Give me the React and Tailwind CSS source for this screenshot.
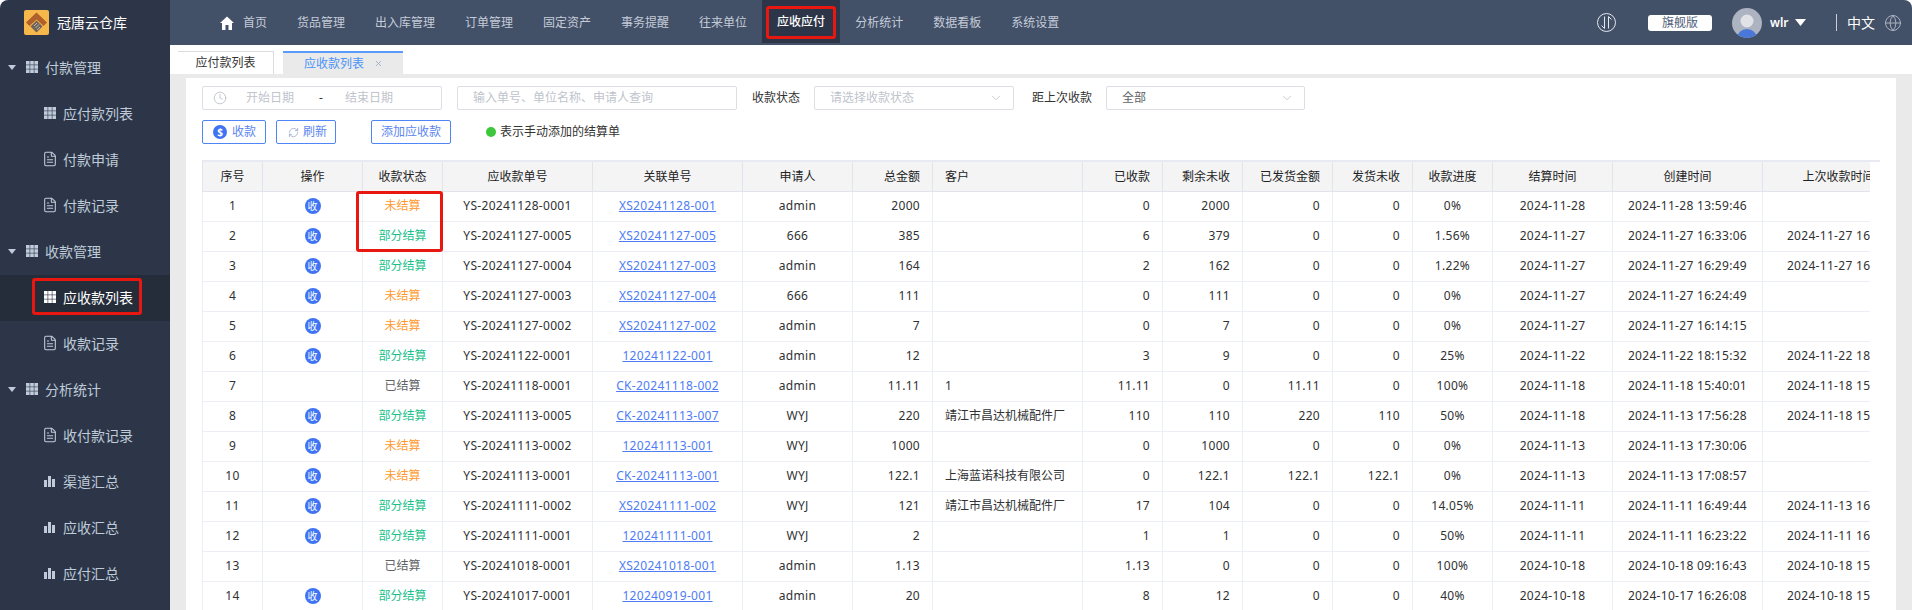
import { ChevronDown, Clock, FileText, Globe, RefreshCw, X } from "lucide-react";

const navItems = ["货品管理", "出入库管理", "订单管理", "固定资产", "事务提醒", "往来单位", "应收应付", "分析统计", "数据看板", "系统设置"];

const sideMenu = [
  {
    title: "付款管理",
    items: [
      { label: "应付款列表", icon: "grid" },
      { label: "付款申请", icon: "file" },
      { label: "付款记录", icon: "file" },
    ],
  },
  {
    title: "收款管理",
    items: [
      { label: "应收款列表", icon: "grid", active: true },
      { label: "收款记录", icon: "file" },
    ],
  },
  {
    title: "分析统计",
    items: [
      { label: "收付款记录", icon: "file" },
      { label: "渠道汇总", icon: "bar" },
      { label: "应收汇总", icon: "bar" },
      { label: "应付汇总", icon: "bar" },
    ],
  },
];

const columns = [
  { title: "序号", width: "w-[60px]", align: "text-center" },
  { title: "操作", width: "w-[100px]", align: "text-center" },
  { title: "收款状态", width: "w-[80px]", align: "text-center" },
  { title: "应收款单号", width: "w-[150px]", align: "text-center" },
  { title: "关联单号", width: "w-[150px]", align: "text-center" },
  { title: "申请人", width: "w-[110px]", align: "text-center" },
  { title: "总金额", width: "w-[80px]", align: "text-right" },
  { title: "客户", width: "w-[150px]", align: "text-left" },
  { title: "已收款", width: "w-[80px]", align: "text-right" },
  { title: "剩余未收", width: "w-[80px]", align: "text-right" },
  { title: "已发货金额", width: "w-[90px]", align: "text-right" },
  { title: "发货未收", width: "w-[80px]", align: "text-right" },
  { title: "收款进度", width: "w-[80px]", align: "text-center" },
  { title: "结算时间", width: "w-[120px]", align: "text-center" },
  { title: "创建时间", width: "w-[150px]", align: "text-center" },
  { title: "上次收款时间", width: "w-[168px]", align: "text-center" },
];

// 序号 is taken from the array index
const rows = [
  ["未结算", "YS-20241128-0001", "XS20241128-001", "admin", "2000", "", "0", "2000", "0", "0", "0%", "2024-11-28", "2024-11-28 13:59:46", ""],
  ["部分结算", "YS-20241127-0005", "XS20241127-005", "666", "385", "", "6", "379", "0", "0", "1.56%", "2024-11-27", "2024-11-27 16:33:06", "2024-11-27 16:40:12"],
  ["部分结算", "YS-20241127-0004", "XS20241127-003", "admin", "164", "", "2", "162", "0", "0", "1.22%", "2024-11-27", "2024-11-27 16:29:49", "2024-11-27 16:35:20"],
  ["未结算", "YS-20241127-0003", "XS20241127-004", "666", "111", "", "0", "111", "0", "0", "0%", "2024-11-27", "2024-11-27 16:24:49", ""],
  ["未结算", "YS-20241127-0002", "XS20241127-002", "admin", "7", "", "0", "7", "0", "0", "0%", "2024-11-27", "2024-11-27 16:14:15", ""],
  ["部分结算", "YS-20241122-0001", "120241122-001", "admin", "12", "", "3", "9", "0", "0", "25%", "2024-11-22", "2024-11-22 18:15:32", "2024-11-22 18:20:41"],
  ["已结算", "YS-20241118-0001", "CK-20241118-002", "admin", "11.11", "1", "11.11", "0", "11.11", "0", "100%", "2024-11-18", "2024-11-18 15:40:01", "2024-11-18 15:42:10"],
  ["部分结算", "YS-20241113-0005", "CK-20241113-007", "WYJ", "220", "靖江市昌达机械配件厂", "110", "110", "220", "110", "50%", "2024-11-18", "2024-11-13 17:56:28", "2024-11-18 15:30:18"],
  ["未结算", "YS-20241113-0002", "120241113-001", "WYJ", "1000", "", "0", "1000", "0", "0", "0%", "2024-11-13", "2024-11-13 17:30:06", ""],
  ["未结算", "YS-20241113-0001", "CK-20241113-001", "WYJ", "122.1", "上海蓝诺科技有限公司", "0", "122.1", "122.1", "122.1", "0%", "2024-11-13", "2024-11-13 17:08:57", ""],
  ["部分结算", "YS-20241111-0002", "XS20241111-002", "WYJ", "121", "靖江市昌达机械配件厂", "17", "104", "0", "0", "14.05%", "2024-11-11", "2024-11-11 16:49:44", "2024-11-13 16:10:33"],
  ["部分结算", "YS-20241111-0001", "120241111-001", "WYJ", "2", "", "1", "1", "0", "0", "50%", "2024-11-11", "2024-11-11 16:23:22", "2024-11-11 16:30:05"],
  ["已结算", "YS-20241018-0001", "XS20241018-001", "admin", "1.13", "", "1.13", "0", "0", "0", "100%", "2024-10-18", "2024-10-18 09:16:43", "2024-10-18 15:20:16"],
  ["部分结算", "YS-20241017-0001", "120240919-001", "admin", "20", "", "8", "12", "0", "0", "40%", "2024-10-18", "2024-10-17 16:26:08", "2024-10-18 15:12:47"],
];

const statusColor = {
  未结算: "text-[#ff9a2e]",
  部分结算: "text-[#1cbf8b]",
  已结算: "text-[#606266]",
};

function GridIcon({ className }) {
  return (
    <svg viewBox="0 0 12 12" className={className} fill="currentColor">
      <rect x="0" y="0" width="3.6" height="3.6" />
      <rect x="4.2" y="0" width="3.6" height="3.6" />
      <rect x="8.4" y="0" width="3.6" height="3.6" />
      <rect x="0" y="4.2" width="3.6" height="3.6" />
      <rect x="4.2" y="4.2" width="3.6" height="3.6" />
      <rect x="8.4" y="4.2" width="3.6" height="3.6" />
      <rect x="0" y="8.4" width="3.6" height="3.6" />
      <rect x="4.2" y="8.4" width="3.6" height="3.6" />
      <rect x="8.4" y="8.4" width="3.6" height="3.6" />
    </svg>
  );
}

function BarIcon({ className }) {
  return (
    <svg viewBox="0 0 11 11" className={className} fill="currentColor">
      <rect x="0" y="4" width="3" height="7" />
      <rect x="4" y="0" width="3" height="11" />
      <rect x="8" y="3" width="3" height="8" />
    </svg>
  );
}

function Caret({ className }) {
  return (
    <svg viewBox="0 0 8 5" className={className} fill="currentColor">
      <path d="M0 0h8L4 5z" />
    </svg>
  );
}

function Logo() {
  return (
    <svg viewBox="0 0 25 25" className="w-[25px] h-[25px] shrink-0">
      <rect width="25" height="25" rx="2" fill="#f7b84b" />
      <path d="M12.5 2.5 23 12.5 19.5 16 12.5 9.5 5.5 16 2 12.5z" fill="#b0602a" />
      <path d="M12.5 10.5 18.5 16.5 12.5 22.5 6.5 16.5z" fill="#6f6259" />
      <path d="M10 16l3-3M11.5 18l3.5-3.5M13 20l3-3" stroke="#d8d0c8" strokeWidth="0.8" />
    </svg>
  );
}

function Avatar() {
  return (
    <svg viewBox="0 0 30 30" className="w-[30px] h-[30px] shrink-0">
      <clipPath id="avatar-clip">
        <circle cx="15" cy="15" r="15" />
      </clipPath>
      <g clipPath="url(#avatar-clip)">
        <rect width="30" height="30" fill="#adb3c0" />
        <circle cx="15" cy="13" r="6.5" fill="#e0e2e7" />
        <ellipse cx="15" cy="30" rx="10" ry="9" fill="#4a78d8" />
      </g>
    </svg>
  );
}

function SideMenu() {
  return (
    <div>
      {sideMenu.map((group) => (
        <div key={group.title}>
          <div className="h-[46px] pb-[2px] flex items-center pl-[8px] text-[14px] text-[#bfcbd9]">
            <Caret className="w-[8px] h-[5px] mr-[10px]" />
            <GridIcon className="w-[12px] h-[12px] mr-[7px]" />
            {group.title}
          </div>
          {group.items.map((item) => (
            <div
              key={item.label}
              className={`h-[46px] pb-[2px] flex items-center pl-[44px] text-[14px] ${
                item.active ? "relative bg-[#252c3a] text-white" : "text-[#bfcbd9]"
              }`}
            >
              {item.icon === "grid" && <GridIcon className="w-[12px] h-[12px] mr-[7px]" />}
              {item.icon === "file" && <FileText className="-ml-[2px] w-[16px] h-[16px] mr-[5px]" strokeWidth={1.6} />}
              {item.icon === "bar" && <BarIcon className="w-[11px] h-[11px] mr-[8px]" />}
              {item.label}
              {item.active && (
                <span className="absolute left-[32px] top-[3px] w-[110px] h-[37px] border-[3px] border-[#e8170f] rounded-[3px]" />
              )}
            </div>
          ))}
        </div>
      ))}
    </div>
  );
}

function TopBar() {
  return (
    <div className="h-[45px] shrink-0 bg-[#425068] rounded-tr-[8px] flex items-center pl-[35px] text-[12px] text-[#c5ccd8]">
      <div className="h-full flex items-center px-[15px]">
        <svg viewBox="0 0 14 14" className="w-[14px] h-[14px] mr-[9px] text-white" fill="currentColor">
          <path d="M7 0.5 14 7h-2v7H8.5V9h-3v5H2V7H0z" />
        </svg>
        首页
      </div>
      {navItems.map((name) =>
        name === "应收应付" ? (
          <div key={name} className="relative h-[43px] self-start px-[15px] flex items-center bg-[#2d3648] text-white font-medium">
            {name}
            <span className="absolute left-[4px] top-[6px] w-[70px] h-[33px] border-[3px] border-[#e8170f] rounded-[3px]" />
          </div>
        ) : (
          <div key={name} className="h-full px-[15px] flex items-center">
            {name}
          </div>
        )
      )}
      <div className="ml-auto flex items-center pr-[10px]">
        <svg viewBox="0 0 19 19" className="w-[19px] h-[19px] text-[#e4e7ed]" fill="none" stroke="currentColor" strokeWidth="1">
          <circle cx="9.5" cy="9.5" r="9" />
          <path d="M7.5 3.5v12L4.5 12.5M11.5 15.5v-12l3 3" />
        </svg>
        <span className="ml-[32px] w-[64px] h-[16px] rounded-[3px] bg-white text-[#51607a] text-[12px] flex items-center justify-center">旗舰版</span>
        <div className="ml-[20px]">
          <Avatar />
        </div>
        <span className="ml-[8px] w-[17px] text-white text-[12px] font-semibold">wlr</span>
        <Caret className="ml-[8px] w-[11px] h-[7px] text-white" />
        <span className="ml-[30px] w-px h-[17px] bg-[#c9ced8]" />
        <span className="ml-[10px] text-white text-[14px]">中文</span>
        <Globe className="ml-[9px] w-[18px] h-[18px] text-[#b4bac6]" strokeWidth={1.2} />
      </div>
    </div>
  );
}

function Tabs() {
  return (
    <div className="h-[29px] shrink-0 flex items-end pl-[8px] text-[12px]">
      <div className="w-[96px] h-[23px] flex items-center justify-center border-t border-r border-[#dcdcdc] text-[#333]">应付款列表</div>
      <div className="ml-[9px] w-[120px] h-[23px] bg-[#eaeaea] border-t-2 border-[#5a9cf8] flex items-center pl-[21px] text-[#4a94f8]">
        应收款列表
        <X className="ml-[10px] w-[9px] h-[9px] text-[#8aa4c8]" />
      </div>
    </div>
  );
}

function Filters() {
  return (
    <div className="flex items-center h-[24px] text-[12px] text-[#333]">
      <div className="w-[240px] h-full border border-[#dcdfe6] rounded-[2px] flex items-center pl-[10px] text-[#c0c4cc]">
        <Clock className="w-[14px] h-[14px]" strokeWidth={1.6} />
        <span className="ml-[19px]">开始日期</span>
        <span className="ml-[25px] text-[#333]">-</span>
        <span className="ml-[22px]">结束日期</span>
      </div>
      <div className="ml-[15px] w-[280px] h-full border border-[#dcdfe6] rounded-[2px] flex items-center pl-[15px] text-[#c0c4cc]">输入单号、单位名称、申请人查询</div>
      <span className="ml-[15px]">收款状态</span>
      <div className="ml-[14px] w-[200px] h-full border border-[#dcdfe6] rounded-[2px] flex items-center justify-between pl-[15px] pr-[10px] text-[#c0c4cc]">
        请选择收款状态
        <ChevronDown className="w-[14px] h-[14px]" strokeWidth={1.5} />
      </div>
      <span className="ml-[18px]">距上次收款</span>
      <div className="ml-[14px] w-[199px] h-full border border-[#dcdfe6] rounded-[2px] flex items-center justify-between pl-[15px] pr-[10px] text-[#606266]">
        全部
        <ChevronDown className="w-[14px] h-[14px] text-[#c0c4cc]" strokeWidth={1.5} />
      </div>
    </div>
  );
}

function Actions() {
  return (
    <div className="mt-[10px] flex items-center h-[24px] text-[12px] text-[#5b86f0]">
      <button className="w-[64px] h-full border border-[#4f86f7] rounded-[2px] flex items-center pl-[10px]">
        <span className="w-[14px] h-[14px] rounded-full bg-[#3f74f2] text-white text-[10px] font-bold flex items-center justify-center">$</span>
        <span className="ml-[5px]">收款</span>
      </button>
      <button className="ml-[10px] w-[60px] h-full border border-[#4f86f7] rounded-[2px] flex items-center pl-[11px]">
        <RefreshCw className="w-[11px] h-[11px] text-[#8c9cc0]" strokeWidth={1.5} />
        <span className="ml-[4px]">刷新</span>
      </button>
      <button className="ml-[35px] w-[80px] h-full border border-[#4f86f7] rounded-[2px] flex items-center justify-center">添加应收款</button>
      <span className="ml-[35px] w-[10px] h-[10px] rounded-full bg-[#3cc73c]" />
      <span className="ml-[4px] text-[#333]">表示手动添加的结算单</span>
    </div>
  );
}

function DataTable() {
  return (
    <div className="mt-[16px] w-[1678px] border-t-2 border-[#e8eaf2]">
      <div className="w-[1668px] overflow-hidden">
        <table className="table-fixed w-[1728px] border-separate border-spacing-0 text-[12px] text-[#303133]">
          <colgroup>
            {columns.map((col) => (
              <col key={col.title} className={col.width} />
            ))}
          </colgroup>
          <thead>
            <tr>
              {columns.map((col) => (
                <th
                  key={col.title}
                  className={`h-[30px] p-0 px-[12px] font-normal whitespace-nowrap overflow-hidden bg-[#f4f4f5] text-[#222] border-l border-b border-[#e1e4ec] ${col.align} ${
                    col.title === "上次收款时间" ? "pr-[28px]" : ""
                  }`}
                >
                  {col.title}
                </th>
              ))}
            </tr>
          </thead>
          <tbody>
            {rows.map((row, i) => (
              <tr key={row[1]}>
                {columns.map((col, c) => {
                  const value = row[c - 2];
                  return (
                    <td
                      key={col.title}
                      className={`h-[30px] p-0 px-[12px] pb-[2px] whitespace-nowrap overflow-hidden border-l border-b border-[#ebeef5] ${col.align} ${
                        c === 2 ? statusColor[row[0]] : ""
                      } ${c === 2 || c === 7 ? "" : "tracking-[0.3px]"}`}
                    >
                      {c === 0 && i + 1}
                      {c === 1 && row[0] !== "已结算" && (
                        <span className="inline-flex w-[16px] h-[16px] rounded-full bg-[#3f74f2] text-white text-[10px] tracking-normal items-center justify-center align-middle">收</span>
                      )}
                      {c === 4 && <a className="text-[#4d7cf5] underline">{value}</a>}
                      {c > 1 && c !== 4 && value}
                    </td>
                  );
                })}
              </tr>
            ))}
          </tbody>
        </table>
      </div>
    </div>
  );
}

export default function App() {
  return (
    <div className="relative w-[1912px] h-[610px] overflow-hidden flex bg-white font-['Noto_Sans','Noto_Sans_CJK_SC',sans-serif]">
      <div className="w-[170px] shrink-0 bg-[#2d3648] rounded-tl-[8px]">
        <div className="h-[45px] flex items-center pl-[24px] text-[14px] text-white">
          <Logo />
          <span className="ml-[8px]">冠唐云仓库</span>
        </div>
        <SideMenu />
      </div>
      <div className="flex-1 min-w-0 flex flex-col">
        <TopBar />
        <Tabs />
        <div className="flex-1 min-h-0 bg-[#eaeaea] pt-[4px] px-[16px]">
          <div className="h-full bg-white px-[16px] pt-[8px] overflow-hidden">
            <Filters />
            <Actions />
            <DataTable />
          </div>
        </div>
      </div>
      {/* red marker drawn over the status cells of rows 1 and 2 */}
      <span className="absolute left-[356px] top-[191px] w-[87px] h-[61px] border-[3px] border-[#e8170f] rounded-[3px]" />
    </div>
  );
}
